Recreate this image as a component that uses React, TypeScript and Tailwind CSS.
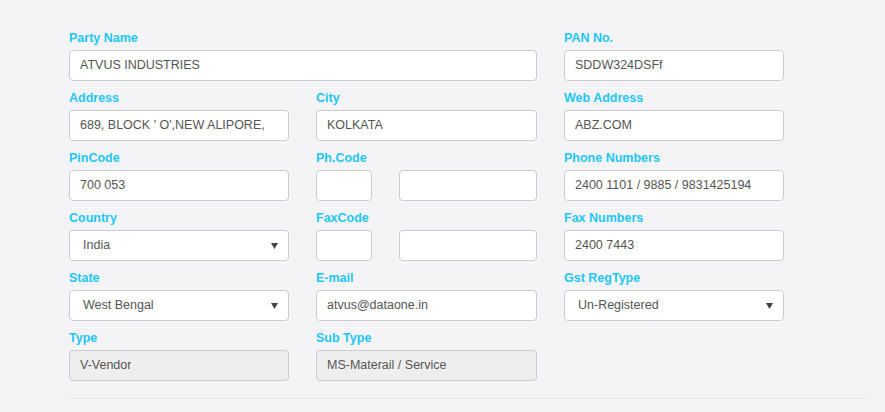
const LABEL = "block text-[12.5px] leading-[16px] font-bold text-[#1ec6f7] mb-[4px]";
const BOX =
  "h-[31px] rounded-[4px] border border-[#cccccc] flex items-center text-[12.5px] text-[#555555]";

function Field({ label, children, className = "" }: { label: string; children: React.ReactNode; className?: string }) {
  return (
    <div className={className}>
      <span className={LABEL}>{label}</span>
      {children}
    </div>
  );
}

function Input({ value = "", disabled = false, className = "" }: { value?: string; disabled?: boolean; className?: string }) {
  return (
    <div className={`${BOX} px-[10px] ${disabled ? "bg-[#eeeeee]" : "bg-white"} ${className}`}>
      <span className="truncate whitespace-nowrap">{value}</span>
    </div>
  );
}

function Select({ value }: { value: string }) {
  return (
    <div className={`${BOX} bg-white pl-[13px] pr-[10px] justify-between`}>
      <span>{value}</span>
      <svg width="7" height="6" viewBox="0 0 7 6" className="mt-[1px]">
        <path d="M0 0 H7 L3.5 6 Z" fill="#444" />
      </svg>
    </div>
  );
}

function CodePair() {
  return (
    <div className="flex gap-[27px]">
      <Input className="w-[56px]" />
      <Input className="flex-1" />
    </div>
  );
}

export default function App() {
  return (
    <div className="w-[885px] h-[412px] bg-[#f4f4f6] font-['Liberation_Sans',Arial,sans-serif] overflow-hidden">
      <div className="pl-[69px] pt-[30px] w-[867px]">
        <div className="grid grid-cols-[220px_221px_220px] gap-x-[27px] gap-y-[9px]">
          <Field label="Party Name" className="col-span-2">
            <Input value="ATVUS INDUSTRIES" />
          </Field>
          <Field label="PAN No.">
            <Input value="SDDW324DSFf" />
          </Field>

          <Field label="Address">
            <Input value="689, BLOCK ' O',NEW ALIPORE," />
          </Field>
          <Field label="City">
            <Input value="KOLKATA" />
          </Field>
          <Field label="Web Address">
            <Input value="ABZ.COM" />
          </Field>

          <Field label="PinCode">
            <Input value="700 053" />
          </Field>
          <Field label="Ph.Code">
            <CodePair />
          </Field>
          <Field label="Phone Numbers">
            <Input value="2400 1101 / 9885 / 9831425194" />
          </Field>

          <Field label="Country">
            <Select value="India" />
          </Field>
          <Field label="FaxCode">
            <CodePair />
          </Field>
          <Field label="Fax Numbers">
            <Input value="2400 7443" />
          </Field>

          <Field label="State">
            <Select value="West Bengal" />
          </Field>
          <Field label="E-mail">
            <Input value="atvus@dataone.in" />
          </Field>
          <Field label="Gst RegType">
            <Select value="Un-Registered" />
          </Field>

          <Field label="Type">
            <Input value="V-Vendor" disabled />
          </Field>
          <Field label="Sub Type">
            <Input value="MS-Materail / Service" disabled />
          </Field>
        </div>
        <div className="mt-[17px] border-t border-[#e6e6ea] w-[798px]" />
      </div>
    </div>
  );
}
